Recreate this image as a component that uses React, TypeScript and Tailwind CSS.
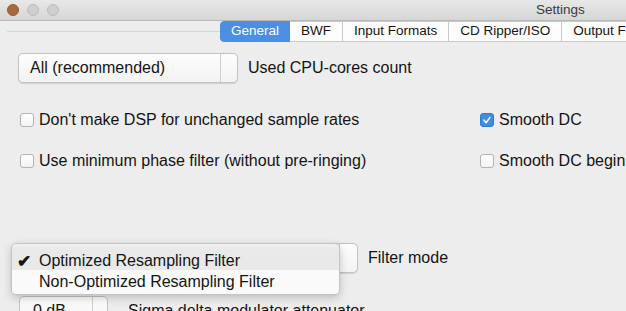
import React from "react";

const tabs = ["General", "BWF", "Input Formats", "CD Ripper/ISO", "Output Formats"];

const Checkbox = ({ checked = false }: { checked?: boolean }) =>
  checked ? (
    <span className="w-[14px] h-[14px] rounded-[3px] bg-[#3b8de6] border border-[#2f7bd3] flex items-center justify-center shrink-0">
      <svg width="10" height="10" viewBox="0 0 10 10">
        <path d="M2 5.2 L4.2 7.6 L8 2.4" fill="none" stroke="#fff" strokeWidth="1.6" strokeLinecap="round" strokeLinejoin="round" />
      </svg>
    </span>
  ) : (
    <span className="w-[14px] h-[14px] rounded-[3px] bg-gradient-to-b from-white to-[#f4f4f4] border border-[#b3b3b3] shrink-0" />
  );

const PopupButton = ({ label, width, arrowWidth }: { label?: string; width: number; arrowWidth: number }) => (
  <div
    className="h-[30px] flex rounded-[5px] border border-[#c3c3c3] bg-gradient-to-b from-[#fdfdfd] to-[#f3f3f3] shadow-[0_0.5px_1px_rgba(0,0,0,0.12)] shrink-0"
    style={{ width }}
  >
    <div className="flex-1 flex items-center pl-[11px]">{label}</div>
    <div className="border-l border-[#cfcfcf]" style={{ width: arrowWidth }} />
  </div>
);

const App = () => {
  return (
    <div className="w-[626px] h-[311px] overflow-hidden relative bg-[#ededed] text-[16px] text-[#141414] font-['Liberation_Sans',Arial,sans-serif]">
      {/* Title bar */}
      <div className="h-[21px] flex items-center border-b border-[#b8b8b8] bg-gradient-to-b from-[#e9e8e9] to-[#d7d6d7]">
        <div className="flex items-center gap-[8px] pl-[7px]">
          <span className="w-[12px] h-[12px] rounded-full bg-[#a8693b] border border-[#96592e]" />
          <span className="w-[12px] h-[12px] rounded-full bg-[#d0cfd0] border border-[#bcbbbc]" />
          <span className="w-[12px] h-[12px] rounded-full bg-[#d0cfd0] border border-[#bcbbbc]" />
        </div>
        <div className="ml-[477px] text-[13.5px] text-[#3a3a3a]">Settings</div>
      </div>

      {/* Tabs */}
      <div className="relative z-10 flex ml-[220px] h-[21px] text-[13.5px] whitespace-nowrap">
        {tabs.map((t, i) => (
          <div
            key={t}
            className={
              i === 0
                ? "h-full flex items-center px-[10px] rounded-l-[4px] bg-[#4a8fe3] text-white border border-[#4a8fe3]"
                : "h-full flex items-center px-[11px] bg-[#fdfdfd] border-y border-r border-[#c9c9c9]"
            }
          >
            {t}
          </div>
        ))}
      </div>

      {/* Tab view box */}
      <div className="-mt-[11px] ml-[7px] border-t border-[#d6d6d6] pt-[21px]">
        <div className="flex items-center pl-[11px] gap-[10px]">
          <PopupButton label="All (recommended)" width={220} arrowWidth={17} />
          <span>Used CPU-cores count</span>
        </div>

        <div className="flex items-center h-[20px] mt-[27px] pl-[13px]">
          <div className="w-[460px] flex items-center gap-[5px]">
            <Checkbox />
            <span>Don't make DSP for unchanged sample rates</span>
          </div>
          <div className="flex items-center gap-[5px] whitespace-nowrap">
            <Checkbox checked />
            <span>Smooth DC</span>
          </div>
        </div>

        <div className="flex items-center h-[20px] mt-[21px] pl-[13px]">
          <div className="w-[460px] flex items-center gap-[5px]">
            <Checkbox />
            <span>Use minimum phase filter (without pre-ringing)</span>
          </div>
          <div className="flex items-center gap-[5px] whitespace-nowrap">
            <Checkbox />
            <span>Smooth DC begin</span>
          </div>
        </div>

        <div className="flex items-center mt-[72px] pl-[11px] gap-[10px]">
          <PopupButton width={340} arrowWidth={18} />
          <span>Filter mode</span>
        </div>

        <div className="flex items-center mt-[23px] pl-[12px] gap-[20px] whitespace-nowrap">
          <div className="h-[30px] w-[89px] flex rounded-[5px] border border-[#c3c3c3] bg-gradient-to-b from-[#fdfdfd] to-[#f3f3f3] shrink-0">
            <div className="w-[73px] flex items-center pl-[13px] border-r border-[#cfcfcf]">0 dB</div>
          </div>
          <span>Sigma delta modulator attenuator</span>
        </div>
      </div>

      {/* Open popup menu */}
      <div className="absolute left-[11px] top-[243px] w-[329px] h-[52px] rounded-[5px] border border-[#c4c4c4] bg-[linear-gradient(to_bottom,#f1f1f1_0px,#e9e9e9_6px,#e9e9e9_26px,#fafafa_26px)] shadow-[0_3px_8px_rgba(0,0,0,0.2)] pt-[7px]">
        <div className="h-[20px] flex items-center">
          <span className="w-[27px] pl-[5px] text-[17px] font-bold leading-none">✔</span>
          <span>Optimized Resampling Filter</span>
        </div>
        <div className="h-[21px] flex items-center pt-[1px]">
          <span className="w-[27px]" />
          <span>Non-Optimized Resampling Filter</span>
        </div>
      </div>
    </div>
  );
};

export default App;
